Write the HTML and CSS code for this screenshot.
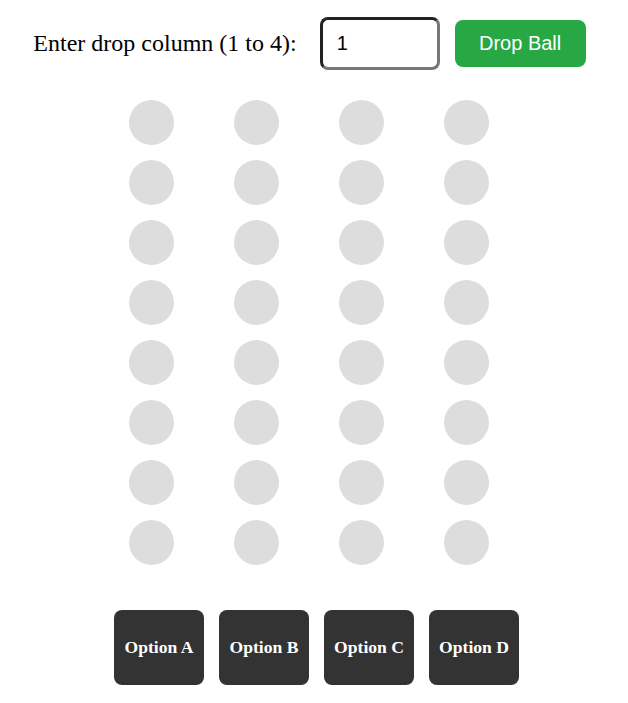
FILE: index.html
```html
<!DOCTYPE html>
<html lang="en">
<head>
<meta charset="utf-8">
<title>Drop Ball</title>
<link rel="stylesheet" href="styles.css">
</head>
<body>
  <div class="controls">
    <label class="label" for="col">Enter drop column (1 to 4):</label>
    <input class="col-input" id="col" type="text" value="1">
    <button class="drop-btn">Drop Ball</button>
  </div>
  <div class="board-wrap">
    <div class="board">
      <span class="peg"></span><span class="peg"></span><span class="peg"></span><span class="peg"></span>
      <span class="peg"></span><span class="peg"></span><span class="peg"></span><span class="peg"></span>
      <span class="peg"></span><span class="peg"></span><span class="peg"></span><span class="peg"></span>
      <span class="peg"></span><span class="peg"></span><span class="peg"></span><span class="peg"></span>
      <span class="peg"></span><span class="peg"></span><span class="peg"></span><span class="peg"></span>
      <span class="peg"></span><span class="peg"></span><span class="peg"></span><span class="peg"></span>
      <span class="peg"></span><span class="peg"></span><span class="peg"></span><span class="peg"></span>
      <span class="peg"></span><span class="peg"></span><span class="peg"></span><span class="peg"></span>
    </div>
  </div>
  <div class="options">
    <div class="option">Option A</div>
    <div class="option">Option B</div>
    <div class="option">Option C</div>
    <div class="option">Option D</div>
  </div>
</body>
</html>
```
FILE: styles.css
```css
html, body {
  margin: 0;
  padding: 0;
  background: #ffffff;
}
body {
  font-family: "Liberation Serif", "Times New Roman", serif;
  color: #000;
}
.controls {
  display: flex;
  align-items: center;
  justify-content: center;
  padding-top: 17px;
  padding-right: 9px;
}
.label {
  font-size: 24px;
  margin-right: 23px;
}
.col-input {
  box-sizing: border-box;
  width: 120px;
  height: 53px;
  border-style: solid;
  border-width: 3px;
  border-color: #222 #777 #777 #222;
  border-radius: 8px;
  padding: 0 0 0 14px;
  font-family: "Liberation Sans", Arial, sans-serif;
  font-size: 20px;
  color: #000;
  outline: none;
  background: #fff;
}
.drop-btn {
  box-sizing: border-box;
  margin-left: 15px;
  width: 131px;
  height: 47px;
  border: none;
  border-radius: 8px;
  background: #28a745;
  color: #fff;
  font-family: "Liberation Sans", Arial, sans-serif;
  font-size: 20px;
  padding: 0;
}
.board-wrap {
  display: flex;
  justify-content: center;
  padding-right: 10px;
  margin-top: 30px;
}
.board {
  display: grid;
  grid-template-columns: repeat(4, 45px);
  grid-auto-rows: 45px;
  column-gap: 60px;
  row-gap: 15px;
}
.peg {
  width: 45px;
  height: 45px;
  border-radius: 50%;
  background: #dddddd;
}
.options {
  display: flex;
  justify-content: center;
  gap: 15px;
  padding-left: 5px;
  margin-top: 45px;
}
.option {
  width: 90px;
  height: 75px;
  border-radius: 8px;
  background: #333333;
  color: #fff;
  font-weight: bold;
  font-size: 17.6px;
  display: flex;
  align-items: center;
  justify-content: center;
}
```
